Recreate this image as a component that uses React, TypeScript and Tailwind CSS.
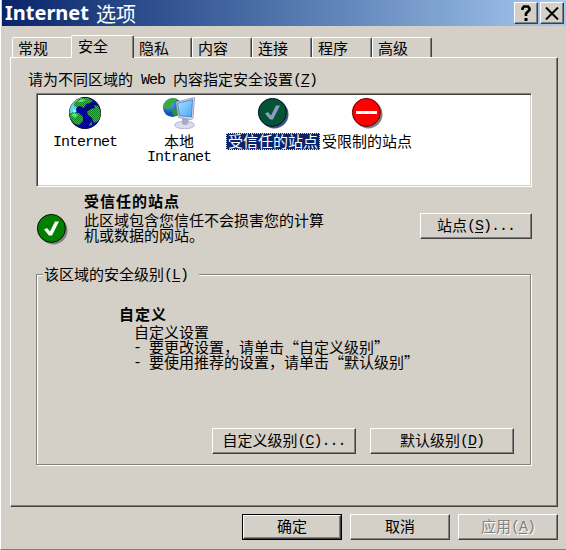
import type { ReactNode } from "react";

const raised =
  "border border-t-white border-l-white border-r-[#404040] border-b-[#404040] shadow-[inset_-1px_-1px_0_#808080] bg-[#d4d0c8]";

/* Half-width latin text set beside the 15px Chinese glyphs, 8px per character */
function L({ children }: { children: ReactNode }) {
  return (
    <span className="align-[1px] font-['Liberation_Mono',monospace] text-[15px] leading-[0] tracking-[-1px] whitespace-pre">
      {children}
    </span>
  );
}

function Key({ k }: { k: string }) {
  return (
    <L>
      (<span className="underline underline-offset-2">{k}</span>)
    </L>
  );
}

function Button({ children, className = "" }: { children: ReactNode; className?: string }) {
  return (
    <button className={`flex h-[26px] items-center justify-center pb-[3px] leading-[15px] ${raised} ${className}`}>
      <span className="whitespace-nowrap">{children}</span>
    </button>
  );
}

function Globe() {
  return (
    <svg width="32" height="32" viewBox="0 0 32 32">
      <defs>
        <pattern id="sea" width="2" height="2" patternUnits="userSpaceOnUse">
          <rect width="2" height="2" fill="#0000f0" />
          <path d="M0 0h1v1H0zM1 1h1v1H1z" fill="#000098" />
        </pattern>
        <pattern id="land" width="2" height="2" patternUnits="userSpaceOnUse">
          <rect width="2" height="2" fill="#20c838" />
          <path d="M0 0h1v1H0zM1 1h1v1H1z" fill="#108018" />
        </pattern>
        <clipPath id="disc">
          <circle cx="16" cy="16" r="15.5" />
        </clipPath>
      </defs>
      <circle cx="16" cy="16" r="16" fill="#111" />
      <g clipPath="url(#disc)">
        <rect width="32" height="32" fill="url(#sea)" />
        <path d="M0 17V10L6 3l5-1 2 4-5 4-2 5z" fill="#58d8e8" />
        <path d="M5 6l6-5 8 0 5 3-3 2-4 1-2 4-4-2-4 1-2-1z" fill="url(#land)" />
        <path d="M0 17l5-2 5 1 4 4 0 4-4 4-4-1-6-6z" fill="url(#land)" />
        <path d="M25 8l4 1 3 6 0 5-3 4-4 2-2-5-4-3-1-4 4-2 4-1z" fill="url(#land)" />
        <path d="M17 11l3-3 4-1 1 1-3 2-1 3-3 1z" fill="#001848" />
        <path d="M21 26l2-1 0 3-3 1z" fill="url(#land)" />
        <path d="M2 18l3-2 4 2-3 3z" fill="#48f070" />
        <path d="M8 5l5-3 4 1-4 2z" fill="#48f070" />
        <path d="M4 12l4 2-3 2z" fill="#c8f8ff" />
      </g>
      <path d="M2 9a15.500 15.500 0 0 1 10-8" fill="none" stroke="#999" />
    </svg>
  );
}

function Intranet() {
  return (
    <svg width="32" height="32" viewBox="0 0 32 32">
      <defs>
        <radialGradient id="ball" cx="35%" cy="30%">
          <stop offset="0" stopColor="#69b8f4" />
          <stop offset="1" stopColor="#1255b4" />
        </radialGradient>
        <linearGradient id="screen" x1="0" y1="0" x2="1" y2="1">
          <stop offset="0" stopColor="#a8e4ff" />
          <stop offset="1" stopColor="#4aa6f4" />
        </linearGradient>
      </defs>
      <circle cx="9.500" cy="10.500" r="9.500" fill="url(#ball)" />
      <path d="M1 8l4-5 5-2 5 1-3 3-3 1-2 5-3 1-3-1z" fill="#3dab2f" />
      <path d="M9 13l5-2 2 4-3 4-3-1z" fill="#2d9a28" />
      <ellipse cx="21.500" cy="28" rx="9.800" ry="3.800" fill="#dcdcee" stroke="#9c9cb8" strokeWidth=".7" />
      <path d="M19 21h7l-1 6q-3 2-6 0z" fill="#a9a9c8" />
      <path d="M13 5L31.500.500 30 21.500 28 22.500 15.500 20.500z" fill="#dfe1f2" stroke="#8c92b8" strokeWidth=".8" />
      <path d="M14.500 6.300L29.500 2.500 28.500 20 16.500 18.800z" fill="url(#screen)" stroke="#3d74c4" strokeWidth=".8" />
    </svg>
  );
}

function Badge({ kind }: { kind: "trusted" | "selected" | "blocked" }) {
  const fill = { trusted: "#008000", selected: "#055235", blocked: "#ff0000" }[kind];
  const rim = { trusted: "#001000", selected: "#00102a", blocked: "#600000" }[kind];
  const shade = kind === "selected" ? "#45527d" : "#808080";
  return (
    <svg width="32" height="32" viewBox="0 0 32 32">
      <circle cx="17.300" cy="17.300" r="14.200" fill={shade} />
      <circle cx="15.400" cy="15.400" r="14" fill={fill} stroke={rim} />
      {kind === "blocked" ? (
        <rect x="5" y="14" width="21" height="3" fill="#fff" />
      ) : (
        <path d="M8 16.500l3-1.500 3 3.500L19 8.500h4L16 22.500h-3z" fill={kind === "selected" ? "#8c9cc0" : "#fff"} />
      )}
    </svg>
  );
}

function Zone({ icon, children }: { icon: ReactNode; children: ReactNode }) {
  return (
    <div className="flex w-[94px] flex-col items-center">
      {icon}
      <div className="mt-1 text-center leading-[15px] whitespace-nowrap">{children}</div>
    </div>
  );
}

const edge =
  "border-t border-l border-r border-t-white border-l-white border-r-[#404040] shadow-[inset_-1px_0_0_#808080] rounded-t-[2px]";

export default function App() {
  return (
    <div className="flex h-[550px] w-[566px] flex-col overflow-hidden border-b border-l border-b-[#808080] border-l-white bg-[#d4d0c8] font-['Noto_Sans_CJK_SC',sans-serif] text-[15px] leading-[15px] text-black">
      <header className="ml-px flex h-[26px] shrink-0 items-center bg-linear-to-r from-[#0a246a] to-[#a6caf0] pr-[2px] pl-[3px] text-white">
        <h1 className="flex flex-1 items-center whitespace-nowrap">
          <span className="w-[91px] font-['Noto_Sans',sans-serif] text-[20px] leading-[26px] font-bold">Internet</span>
          <span className="pt-px text-[20px] leading-[25px]">选项</span>
        </h1>
        <div className="flex gap-[2px]">
          <button className={`flex h-[22px] w-6 items-center justify-center ${raised}`}>
            <svg width="10" height="16" viewBox="0 0 10 16">
              <path d="M1.500 5V3.500L3 1.500h4l1.500 2V5L5 8.500V11" fill="none" stroke="#000" strokeWidth="2.600" />
              <rect x="3.500" y="13" width="3" height="3" />
            </svg>
          </button>
          <button className={`flex h-[22px] w-6 items-center justify-center ${raised}`}>
            <svg width="14" height="13" viewBox="0 0 14 13">
              <path d="M1 .5l12 12M13 .5l-12 12" stroke="#000" strokeWidth="2" />
            </svg>
          </button>
        </div>
      </header>

      <nav className="mt-[9px] ml-[11px] flex h-[22px] shrink-0 items-end">
        <div className="h-5 w-[59px] rounded-tl-[2px] border-t border-l border-white pt-[2px] pl-[5px]">常规</div>
        <div className={`relative -mb-px h-[23px] w-[63px] bg-[#d4d0c8] pt-[2px] pl-[6px] ${edge}`}>安全</div>
        <div className="h-5 w-[58px] rounded-tr-[2px] border-t border-r border-t-white border-r-[#404040] pt-[2px] pl-[5px] shadow-[inset_-1px_0_0_#808080]">
          隐私
        </div>
        {["内容", "连接", "程序", "高级"].map((t) => (
          <div key={t} className={`h-5 w-[60px] pt-[2px] pl-[5px] ${edge}`}>
            {t}
          </div>
        ))}
      </nav>

      <main className={`ml-[9px] flex h-[450px] w-[548px] shrink-0 flex-col pl-[25px] ${raised}`}>
        <p className="mt-[13px] -ml-2 h-[15px] whitespace-nowrap">
          请为不同区域的<L> Web </L>内容指定安全设置<Key k="Z" />
        </p>
        <div className="mt-[7px] flex h-[94px] w-[496px] shrink-0 border border-t-[#808080] border-r-white border-b-white border-l-[#808080] bg-white pt-[3px] pl-px shadow-[inset_1px_1px_0_#404040,inset_-1px_-1px_0_#d4d0c8]">
          <Zone icon={<Globe />}>
            <L>Internet</L>
          </Zone>
          <Zone icon={<Intranet />}>
            本地
            <br />
            <L>Intranet</L>
          </Zone>
          <Zone icon={<Badge kind="selected" />}>
            <div className="h-[17px] border border-dotted border-[#f5db95] bg-[#0a246a] px-px leading-[14px] text-white">
              受信任的站点
            </div>
          </Zone>
          <Zone icon={<Badge kind="blocked" />}>受限制的站点</Zone>
        </div>

        <section className="mt-[7px] flex h-[80px] w-[496px] shrink-0">
          <div className="mt-[19px] w-[48px]">
            <Badge kind="trusted" />
          </div>
          <div className="-mt-px w-[336px]">
            <h2 className="font-bold tracking-[1px]">受信任的站点</h2>
            <p className="mt-1">
              此区域包含您信任不会损害您的计算
              <br />
              机或数据的网站。
            </p>
          </div>
          <Button className="mt-[19px] w-[112px]">
            站点
            <Key k="S" />
            <L>...</L>
          </Button>
        </section>

        <section className="flex h-[191px] w-[495px] shrink-0 flex-col border border-[#808080] shadow-[1px_1px_0_#fff,inset_1px_1px_0_#fff]">
          <h3 className="-mt-[9px] ml-[6px] h-[15px] w-[156px] shrink-0 bg-[#d4d0c8] pl-px whitespace-nowrap">
            该区域的安全级别
            <Key k="L" />
          </h3>
          <div className="mt-[25px] ml-[82px]">
            <h4 className="font-bold tracking-[1px]">自定义</h4>
            <div className="mt-[3px] ml-[15px] whitespace-nowrap">
              <p className="h-[15px]">自定义设置</p>
              <p className="-ml-px h-[15px]">
                <L>- </L>要更改设置，请单击“自定义级别”
              </p>
              <p className="-ml-px h-[15px]">
                <L>- </L>要使用推荐的设置，请单击“默认级别”
              </p>
            </div>
          </div>
          <div className="mt-auto mb-[10px] flex gap-[14px] pl-[175px]">
            <Button className="w-[144px]">
              自定义级别
              <Key k="C" />
              <L>...</L>
            </Button>
            <Button className="w-[144px]">
              默认级别
              <Key k="D" />
            </Button>
          </div>
        </section>
      </main>

      <footer className="mt-[7px] flex gap-2 pl-[241px]">
        <div className="w-[100px] border border-black">
          <button className={`flex h-6 w-full items-center justify-center pb-[3px] ${raised}`}>确定</button>
        </div>
        <Button className="w-[100px]">取消</Button>
        <Button className="w-[100px] text-[#808080] [text-shadow:1px_1px_0_#fff]">
          应用
          <Key k="A" />
        </Button>
      </footer>
    </div>
  );
}
